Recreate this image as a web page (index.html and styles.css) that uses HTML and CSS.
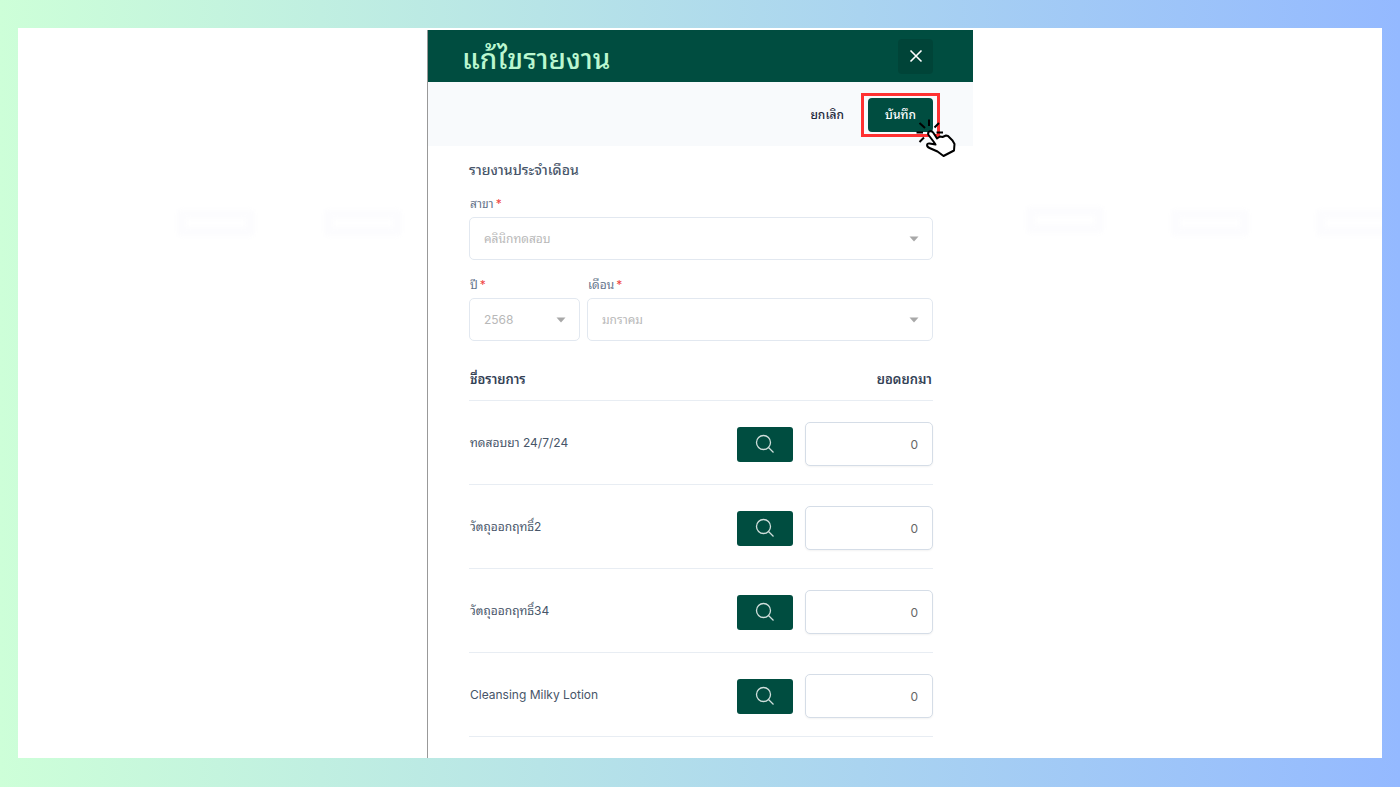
FILE: index.html
```
<!DOCTYPE html>
<html lang="th">

<head>
    <meta charset="UTF-8">
    <meta name="viewport" content="width=device-width, initial-scale=1.0">
    <title>แก้ไขรายงาน</title>
    <link rel="stylesheet" href="styles.css">
</head>

<body>
    <svg class="sprite" aria-hidden="true">
        <symbol id="icon-search" viewBox="0 0 20 20">
            <circle cx="8.5" cy="8.5" r="7" />
            <path d="M13.5 13.5 L18.5 18.5" />
        </symbol>
        <symbol id="icon-caret" viewBox="0 0 10 6">
            <path d="M0.5 0.5 H9.5 L5 5.5 Z" />
        </symbol>
    </svg>

    <div class="page">
        <span class="ghost ghost-1"></span>
        <span class="ghost ghost-2"></span>
        <span class="ghost ghost-3"></span>
        <span class="ghost ghost-4"></span>
        <span class="ghost ghost-5"></span>

        <form class="panel">
            <header class="panel-header">
                <h1>แก้ไขรายงาน</h1>
                <button type="button" class="btn-close" aria-label="ปิด">
                    <svg width="14" height="14" viewBox="0 0 14 14">
                        <path d="M1.5 1.5 L12.5 12.5 M12.5 1.5 L1.5 12.5" />
                    </svg>
                </button>
            </header>

            <div class="toolbar">
                <button type="button" class="btn-cancel">ยกเลิก</button>
                <div class="save">
                    <button type="submit" class="btn-save">บันทึก</button>
                    <span class="highlight"></span>
                    <svg class="pointer" width="40" height="40" viewBox="0 0 40 40">
                        <path class="hand" d="M16.5 22.5 L11.500 16 C10 12.500 14 10.500 16.500 14 L20 19.500 L23 17.500 L25.500 18 L29 16.500 L31 17 L35.500 21.500 L37.500 25 L37 31.500 L26.500 37 L20.500 32.500 L12.500 29 C9 27.500 9.500 24 12.500 24.500 L18.500 25.500 Z" />
                        <path class="rays" d="M12 0.500 V7 M2.500 4 L8 9 M22 4 L17.500 8.500 M-0.500 13.500 H6 M19.500 13.500 H26 M2.500 23 L7 18.500" />
                    </svg>
                </div>
            </div>

            <div class="content">
                <h2>รายงานประจำเดือน</h2>

                <div class="fields">
                    <div class="field">
                        <label for="branch">สาขา<span class="required">*</span></label>
                        <div class="select-wrap">
                            <select id="branch" disabled>
                                <option>คลินิกทดสอบ</option>
                            </select>
                            <svg class="caret"><use href="#icon-caret" /></svg>
                        </div>
                    </div>
                    <div class="field-row">
                        <div class="field field-year">
                            <label for="year">ปี<span class="required">*</span></label>
                            <div class="select-wrap">
                                <select id="year" disabled>
                                    <option>2568</option>
                                </select>
                                <svg class="caret"><use href="#icon-caret" /></svg>
                            </div>
                        </div>
                        <div class="field field-month">
                            <label for="month">เดือน<span class="required">*</span></label>
                            <div class="select-wrap">
                                <select id="month" disabled>
                                    <option>มกราคม</option>
                                </select>
                                <svg class="caret"><use href="#icon-caret" /></svg>
                            </div>
                        </div>
                    </div>
                </div>

                <table class="items">
                    <thead>
                        <tr>
                            <th>ชื่อรายการ</th>
                            <th class="right">ยอดยกมา</th>
                        </tr>
                    </thead>
                    <tbody>
                        <tr>
                            <td><label for="item1">ทดสอบยา 24/7/24</label></td>
                            <td>
                                <div class="amount">
                                    <button type="button" class="btn-search" aria-label="ค้นหา"><svg><use href="#icon-search" /></svg></button>
                                    <input type="text" id="item1" value="0">
                                </div>
                            </td>
                        </tr>
                        <tr>
                            <td><label for="item2">วัตถุออกฤทธิ์2</label></td>
                            <td>
                                <div class="amount">
                                    <button type="button" class="btn-search" aria-label="ค้นหา"><svg><use href="#icon-search" /></svg></button>
                                    <input type="text" id="item2" value="0">
                                </div>
                            </td>
                        </tr>
                        <tr>
                            <td><label for="item3">วัตถุออกฤทธิ์34</label></td>
                            <td>
                                <div class="amount">
                                    <button type="button" class="btn-search" aria-label="ค้นหา"><svg><use href="#icon-search" /></svg></button>
                                    <input type="text" id="item3" value="0">
                                </div>
                            </td>
                        </tr>
                        <tr>
                            <td><label for="item4">Cleansing Milky Lotion</label></td>
                            <td>
                                <div class="amount">
                                    <button type="button" class="btn-search" aria-label="ค้นหา"><svg><use href="#icon-search" /></svg></button>
                                    <input type="text" id="item4" value="0">
                                </div>
                            </td>
                        </tr>
                    </tbody>
                </table>
            </div>
        </form>
    </div>
</body>

</html>
```
FILE: styles.css
```
* {
    box-sizing: border-box;
}

body {
    margin: 0;
    min-height: 100vh;
    padding: 28px 18px 29px;
    display: flex;
    font-family: Inter, "Noto Sans Thai Looped", "Noto Sans", sans-serif;
    font-size: 12px;
    line-height: 20px;
    color: #475569;
    background: linear-gradient(90deg, #cdffd8, #94b9ff);
}

button,
input,
select {
    font: inherit;
}

.sprite {
    position: absolute;
    width: 0;
    height: 0;
}

.page {
    position: relative;
    flex: 1;
    display: flex;
    justify-content: center;
    padding-top: 2px;
    background-color: #fff;
    overflow: hidden;
}

/* faint boxes behind the panel */
.ghost {
    position: absolute;
    top: 182px;
    width: 78px;
    height: 26px;
    border: 9px solid #fcfcfe;
    border-radius: 4px;
    filter: blur(2px);
}

.ghost-1 {
    left: 159px;
}

.ghost-2 {
    left: 306px;
}

.ghost-3 {
    top: 179px;
    right: 278px;
}

.ghost-4 {
    right: 133px;
}

.ghost-5 {
    right: -12px;
}

.panel {
    width: 100%;
    max-width: 546px;
    border-left: 1px solid #999;
    background-color: #fff;
}

.panel-header {
    display: flex;
    align-items: center;
    justify-content: space-between;
    height: 52px;
    padding: 0 40px 0 34px;
    background-color: #004d40;
}

h1 {
    margin: 0;
    padding-top: 6px;
    font-size: 28px;
    line-height: 36px;
    font-weight: 500;
    color: #bbf7d0;
}

.btn-close {
    display: flex;
    align-items: center;
    justify-content: center;
    width: 35px;
    height: 35px;
    padding: 0;
    border: none;
    border-radius: 4px;
    background-color: #004438;
    cursor: pointer;
}

.btn-close svg {
    fill: none;
    stroke: #fff;
    stroke-width: 1.6;
}

.toolbar {
    display: flex;
    align-items: center;
    justify-content: flex-end;
    gap: 24px;
    height: 64px;
    padding: 1px 40px 0;
    background-color: #f8fafc;
}

.btn-cancel {
    padding: 0;
    border: none;
    background: none;
    font-weight: 500;
    color: #1e293b;
    cursor: pointer;
}

.save {
    position: relative;
}

.btn-save {
    display: block;
    width: 65px;
    height: 34px;
    padding: 0;
    border: none;
    border-radius: 4px;
    background-color: #004d40;
    font-weight: 500;
    color: #fff;
    cursor: pointer;
}

.highlight {
    position: absolute;
    inset: -5px -7px;
    border: 3px solid #ff3131;
    pointer-events: none;
}

.pointer {
    position: absolute;
    left: 49px;
    top: 21px;
    overflow: visible;
    stroke: #000;
    stroke-width: 2;
    stroke-linejoin: round;
    pointer-events: none;
}

.pointer .hand {
    fill: #fff;
}

.pointer .rays {
    fill: none;
}

.content {
    padding: 14px 40px 20px 41px;
}

h2 {
    margin: 0;
    font-size: 14px;
    line-height: 20px;
    font-weight: 500;
}

.fields {
    display: flex;
    flex-direction: column;
    gap: 15px;
    margin-top: 14px;
}

.field-row {
    display: flex;
    gap: 7px;
}

.field-year {
    width: 111px;
}

.field-month {
    flex: 1;
}

.field label {
    display: block;
    padding-left: 1px;
    margin-bottom: 3px;
    color: #64748b;
}

.required {
    margin-left: 2px;
    color: #ef4444;
}

.select-wrap {
    position: relative;
}

select {
    display: block;
    appearance: none;
    width: 100%;
    height: 43px;
    padding: 0 14px;
    border: 1px solid #e2e8f0;
    border-radius: 5px;
    background-color: #fff;
    color: #b8b8b8;
    opacity: 1;
}

.caret {
    position: absolute;
    right: 14px;
    top: 19px;
    width: 10px;
    height: 6px;
    fill: #a8a8a8;
    pointer-events: none;
}

.items {
    width: 100%;
    margin-top: 15px;
    border-collapse: collapse;
}

.items th {
    height: 44px;
    padding: 2px 1px 0;
    border-bottom: 1px solid #e8edf3;
    text-align: left;
    font-size: 13px;
    font-weight: 600;
    color: #334155;
}

.items th.right {
    text-align: right;
}

.items td {
    height: 84px;
    padding: 2px 0 0 1px;
    border-bottom: 1px solid #e8edf3;
}

.amount {
    display: flex;
    align-items: center;
    justify-content: flex-end;
    gap: 12px;
    padding-top: 2px;
}

.btn-search {
    display: flex;
    align-items: center;
    justify-content: center;
    width: 56px;
    height: 35px;
    padding: 0;
    border: none;
    border-radius: 3px;
    background-color: #004d40;
    cursor: pointer;
}

.btn-search svg {
    width: 20px;
    height: 20px;
    fill: none;
    stroke: #cfdedb;
    stroke-width: 1.3;
}

.amount input {
    width: 128px;
    height: 44px;
    padding: 0 14px;
    border: 1px solid #d5dde7;
    border-radius: 5px;
    box-shadow: 0 1px 2px rgba(0, 0, 0, 0.05);
    text-align: right;
    color: #666;
}
```
